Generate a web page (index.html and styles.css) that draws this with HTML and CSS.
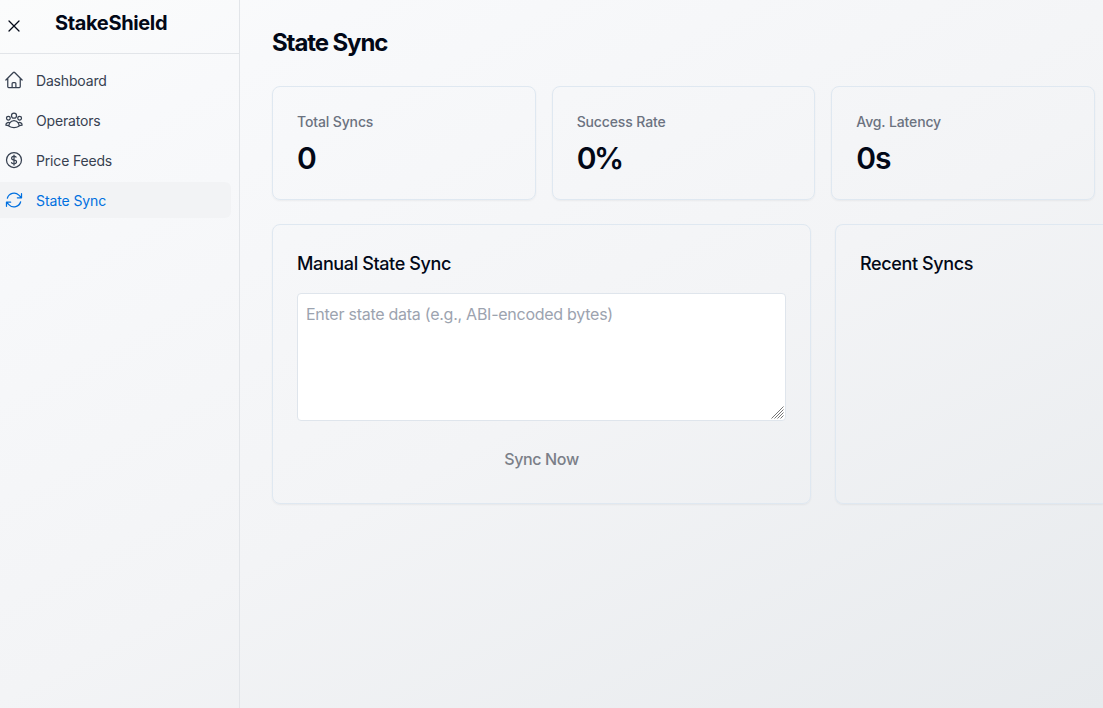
FILE: index.html
```html
<!DOCTYPE html>
<html lang="en">
<head>
<meta charset="utf-8">
<title>StakeShield</title>
<link rel="stylesheet" href="styles.css">
</head>
<body>
<div class="app">
  <aside class="sidebar">
    <header class="brand">
      <button class="close" aria-label="Close"><svg class="close-icon" viewBox="0 0 24 24"><path d="M6 18 18 6M6 6l12 12"/></svg></button>
      <span class="brand-name">StakeShield</span>
    </header>
    <nav class="nav">
      <a class="nav-item"><svg class="icon" viewBox="0 0 24 24"><path d="m2.25 12 8.954-8.955c.44-.439 1.152-.439 1.591 0L21.75 12M4.5 9.75v10.125c0 .621.504 1.125 1.125 1.125H9.75v-4.875c0-.621.504-1.125 1.125-1.125h2.25c.621 0 1.125.504 1.125 1.125V21h4.125c.621 0 1.125-.504 1.125-1.125V9.75M8.25 21h8.25"/></svg>Dashboard</a>
      <a class="nav-item"><svg class="icon" viewBox="0 0 24 24"><path d="M18 18.72a9.094 9.094 0 0 0 3.741-.479 3 3 0 0 0-4.682-2.72m.94 3.198.001.031c0 .225-.012.447-.037.666A11.944 11.944 0 0 1 12 21c-2.17 0-4.207-.576-5.963-1.584A6.062 6.062 0 0 1 6 18.719m12 0a5.971 5.971 0 0 0-.941-3.197m0 0A5.995 5.995 0 0 0 12 12.75a5.995 5.995 0 0 0-5.058 2.772m0 0a3 3 0 0 0-4.681 2.72 8.986 8.986 0 0 0 3.74.477m.94-3.197a5.971 5.971 0 0 0-.94 3.197M15 6.75a3 3 0 1 1-6 0 3 3 0 0 1 6 0Zm6 3a2.25 2.25 0 1 1-4.5 0 2.25 2.25 0 0 1 4.5 0Zm-13.5 0a2.25 2.25 0 1 1-4.5 0 2.25 2.25 0 0 1 4.5 0Z"/></svg>Operators</a>
      <a class="nav-item"><svg class="icon" viewBox="0 0 24 24"><path d="M12 6v12m-3-2.818.879.659c1.171.879 3.07.879 4.242 0 1.172-.879 1.172-2.303 0-3.182C13.536 12.219 12.768 12 12 12c-.725 0-1.45-.22-2.003-.659-1.106-.879-1.106-2.303 0-3.182s2.9-.879 4.006 0l.415.33M21 12a9 9 0 1 1-18 0 9 9 0 0 1 18 0Z"/></svg>Price Feeds</a>
      <a class="nav-item active"><svg class="icon" viewBox="0 0 24 24"><path d="M16.023 9.348h4.992v-.001M2.985 19.644v-4.992m0 0h4.992m-4.993 0 3.181 3.183a8.25 8.25 0 0 0 13.803-3.7M4.031 9.865a8.25 8.25 0 0 1 13.803-3.7l3.181 3.182m0-4.991v4.99"/></svg>State Sync</a>
    </nav>
  </aside>
  <main class="main">
    <h1 class="title">State Sync</h1>
    <section class="stats">
      <div class="card"><div class="label">Total Syncs</div><div class="value">0</div></div>
      <div class="card"><div class="label">Success Rate</div><div class="value value-percent">0%</div></div>
      <div class="card"><div class="label">Avg. Latency</div><div class="value">0s</div></div>
    </section>
    <section class="panels">
      <div class="card panel">
        <h2 class="panel-title">Manual State Sync</h2>
        <div class="field">
          <textarea class="input" placeholder="Enter state data (e.g., ABI-encoded bytes)"></textarea>
          <svg class="grip" viewBox="0 0 13 13"><path d="M.5 12.5l12-12M3.5 12.5l9-9M6.5 12.5l6-6M9.5 12.5l3-3"/></svg>
        </div>
        <button class="sync" disabled>Sync Now</button>
      </div>
      <div class="card panel panel-recent"><h2 class="panel-title">Recent Syncs</h2></div>
    </section>
  </main>
</div>
</body>
</html>
```
FILE: styles.css
```css
* { box-sizing: border-box; }
body { margin: 0; font-family: Inter, sans-serif; color: #020817; line-height: 1.5; }
.app { display: flex; height: 708px; overflow: hidden; background: linear-gradient(152deg, #fbfcfc 0%, #f8f9fb 15%, #f3f4f6 54%, #e7eaed 100%); }
.sidebar { width: 240px; flex: none; border-right: 1px solid #e2e5e9; }
.brand { height: 54px; display: flex; align-items: flex-start; border-bottom: 1px solid #e2e5e9; }
.close { border: 0; background: none; padding: 16px 0 0 4px; width: 55px; text-align: left; line-height: 0; }
.close-icon { width: 20px; height: 20px; fill: none; stroke: #020817; stroke-width: 1.5; stroke-linecap: round; stroke-linejoin: round; }
.brand-name { font-size: 20px; line-height: 28px; font-weight: 700; letter-spacing: -0.36px; padding-top: 9px; }
.nav { display: flex; flex-direction: column; gap: 4px; padding-top: 8px; }
.nav-item { display: flex; align-items: center; gap: 12px; height: 36px; width: 231px; padding-left: 4px; font-size: 14px; letter-spacing: -0.17px; color: #374151; border-radius: 0 6px 6px 0; }
.nav-item.active { color: #0070e0; background: #f2f3f5; letter-spacing: -0.1px; }
.icon { width: 20px; height: 20px; fill: none; stroke: currentColor; stroke-width: 1.5; stroke-linecap: round; stroke-linejoin: round; }
.main { flex: 1; min-width: 0; padding: 27px 0 0 32px; }
.title { margin: 0 0 27px; font-size: 24px; line-height: 32px; font-weight: 700; letter-spacing: -1.1px; }
.stats { display: grid; grid-template-columns: repeat(3, 1fr); gap: 16px; width: 823px; }
.card { border: 1px solid #dfe8f1; border-radius: 8px; padding: 24px; box-shadow: 0 1px 2px rgba(0,0,0,.05); }
.stats .card { height: 114px; }
.label { font-size: 14px; line-height: 22px; font-weight: 500; letter-spacing: -0.13px; color: #6b7280; }
.value { font-size: 30px; line-height: 36px; font-weight: 600; letter-spacing: -1.2px; margin-top: 7px; }
.value-percent { letter-spacing: -2.4px; }
.panels { display: grid; grid-template-columns: 539px minmax(0, 1fr); gap: 24px; margin-top: 24px; }
.panel { height: 280px; }
.panel-recent { border-right: 0; border-radius: 8px 0 0 8px; }
.panel-title { margin: 0; padding: 1px 0 15px; font-size: 18px; line-height: 28px; font-weight: 500; letter-spacing: -0.38px; }
.field { position: relative; }
.input { display: block; width: 100%; height: 128px; padding: 8px; border: 1px solid #dfe5ec; border-radius: 4px; background: #fff; font: 16px/24px Inter, sans-serif; letter-spacing: -0.26px; resize: none; }
.input::placeholder { color: #9ca3af; }
.grip { position: absolute; right: 2px; bottom: 2px; width: 13px; height: 13px; fill: none; stroke: #777; stroke-width: 1; }
.sync { display: block; width: 100%; height: 44px; margin-top: 16px; border: 0; background: none; font: 500 16px/24px Inter, sans-serif; letter-spacing: -0.35px; color: #7b7f88; }
```
